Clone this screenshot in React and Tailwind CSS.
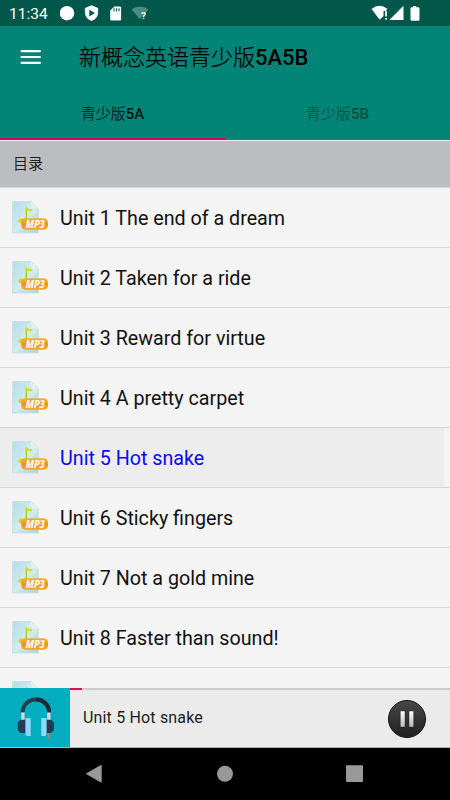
import React from 'react';

const units = [
  'Unit 1 The end of a dream',
  'Unit 2 Taken for a ride',
  'Unit 3 Reward for virtue',
  'Unit 4 A pretty carpet',
  'Unit 5 Hot snake',
  'Unit 6 Sticky fingers',
  'Unit 7 Not a gold mine',
  'Unit 8 Faster than sound!',
];
const current = 4;

function StatusBar() {
  return (
    <div className="flex h-[26px] shrink-0 items-center bg-[#015749] pl-[9px] pr-[30px] text-white">
      <span className="w-[51px] pt-[2px] text-[15.5px] leading-[24px]">11:34</span>
      <svg className="h-[26px] w-[92px]" viewBox="0 0 92 26" fill="#fff">
        <circle cx="7" cy="13.2" r="7.3" />
        <path d="M31.5 5.3l6.6 2.6v4.6c0 3.9-2.7 7.2-6.6 8.4-3.9-1.2-6.6-4.5-6.6-8.4V7.9z" />
        <path d="M29.3 9.7v6.8l5.7-3.4z" fill="#015749" />
        <path d="M54.3 6.4h5.6q1.2 0 1.2 1.200v11.700q0 1.200-1.200 1.200h-8.500q-1.200 0-1.200-1.200v-8.800z" />
        <path d="M54 8.300v3M56.500 8.300v3M59 8.300v3" stroke="#015749" strokeWidth="1.1" />
        <path d="M71.500 9.300q8.400-5.500 16.800 0l-2 2.600-3.700 4-2.800 3.400z" fill="#4c8a80" />
        <text x="81.300" y="18.800" fontSize="9.500" fontWeight="700">?</text>
      </svg>
      <svg className="ml-auto h-[26px] w-[50px]" viewBox="370 0 50 26" fill="#fff">
        <path d="M371.500 9q8-6.400 16 0l-1.800 2.100h-2.200v4.800l-3.800 3.800z" />
        <path d="M385.200 11h1.700v5.500h-1.700zM385.200 18h1.700v1.800h-1.700z" />
        <path d="M403.500 5.700v14.200h-14.200z" />
        <path d="M413 6h3.300v1.300h2q1.200 0 1.200 1.200v11q0 1.200-1.200 1.200h-6.600q-1.200 0-1.200-1.200v-11q0-1.200 1.200-1.200H413z" />
      </svg>
    </div>
  );
}

function Paper() {
  return (
    <>
      <defs>
        <linearGradient id="paper" x1="0" y1="0" x2="1" y2="1">
          <stop offset="0" stopColor="#b4dfe8" />
          <stop offset=".5" stopColor="#cfe8eb" />
          <stop offset="1" stopColor="#a6d6de" />
        </linearGradient>
      </defs>
      <path d="M.5.500H19l7.300 7V32H.5z" fill="url(#paper)" stroke="#c4e0e5" strokeWidth=".8" />
      <path d="M2 31L16 2h3v6h6v3L5 31z" fill="#dceff1" opacity=".5" />
      <path d="M19 .5l7.300 7H20q-1 0-1-1z" fill="#e5eff1" />
    </>
  );
}

function Mp3Icon() {
  return (
    <svg className="h-[34px] w-[37px] shrink-0" viewBox="0 0 37 34">
      <Paper />
      <defs>
        <linearGradient id="badge" x1="0" y1="0" x2="0" y2="1">
          <stop offset="0" stopColor="#f9b125" />
          <stop offset=".5" stopColor="#f6921e" />
          <stop offset="1" stopColor="#f9a72b" />
        </linearGradient>
      </defs>
      <path d="M14.300 6.500v13" stroke="#b4cc1c" strokeWidth="1.500" />
      <path d="M14 6q2 2.600 6.200 1.700v2.500q-4 .5-6-1z" fill="#d4df24" />
      <ellipse cx="10.500" cy="20" rx="4" ry="2.500" fill="#c5d72b" />
      <rect x="9.200" y="17.200" width="26.800" height="11.600" rx="4.500" fill="url(#badge)" />
      <text className="font-['Open_Sans',sans-serif]" x="13.700" y="26.500" fontSize="10" fontWeight="700" fontStyle="italic" fill="#fff" stroke="#fff" strokeWidth=".2" textLength="19" lengthAdjust="spacingAndGlyphs">MP3</text>
    </svg>
  );
}

function UnitRow({ title, active }) {
  return (
    <div className="flex h-[60px] shrink-0 border-b border-[#d5d5d5]">
      <div className={`flex w-[444px] items-center gap-[11px] pl-3 ${active ? 'bg-[#ededed] text-[#0808f5]' : 'text-[#111]'}`}>
        <Mp3Icon />
        <span className="pt-[2px] whitespace-nowrap text-[19.7px] leading-[30px]">{title}</span>
      </div>
    </div>
  );
}

function Headphones() {
  return (
    <svg className="h-[60px] w-[70px]" viewBox="0 688 70 60">
      <path d="M22.700 712.500v-.5a13.200 12.500 0 0 1 26.400 0v.5" fill="none" stroke="#293b50" strokeWidth="4" />
      <path d="M36 699.500a13.200 12.500 0 0 1 13.100 12.500v.5" fill="none" stroke="#202936" strokeWidth="4" />
      <path d="M21.300 712.500h3.300v8.500h-3.300zM47.200 712.500h3.300v8.500h-3.300z" fill="#d5d9dd" />
      <path d="M20.500 719.700h5v13.300h-5l-2.700-3v-7.500zM46.500 719.700h4.700l2.700 2.800v7.500l-2.700 3h-4.700z" fill="#253950" />
      <path d="M25.500 718h5.200v18h-3.200q-2 0-2-2zM41.300 718h5.200v16q0 2-2 2h-3.200z" fill="#91d7fb" />
      <path d="M48.600 733v6" stroke="#a3857f" strokeWidth="1.800" />
    </svg>
  );
}

function PauseButton() {
  return (
    <svg className="mr-[23px] ml-auto h-[40px] w-[40px]" viewBox="0 0 40 40">
      <defs>
        <linearGradient id="disc" x1="0" y1="0" x2="0" y2="1">
          <stop offset="0" stopColor="#484848" />
          <stop offset="1" stopColor="#202020" />
        </linearGradient>
        <linearGradient id="bars" x1="0" y1="0" x2="0" y2="1">
          <stop offset="0" stopColor="#fff" />
          <stop offset="1" stopColor="#b9b9b9" />
        </linearGradient>
      </defs>
      <circle cx="20" cy="20" r="18.500" fill="url(#disc)" stroke="#111" />
      <rect x="13.300" y="12" width="4.700" height="16" rx=".6" fill="url(#bars)" stroke="#111" strokeWidth=".4" />
      <rect x="22" y="12" width="4.700" height="16" rx=".6" fill="url(#bars)" stroke="#111" strokeWidth=".4" />
    </svg>
  );
}

export default function App() {
  return (
    <div className="flex h-[800px] w-[450px] flex-col overflow-hidden bg-[#f4f4f4] font-['Roboto','Noto_Sans_CJK_SC',sans-serif]">
      <StatusBar />
      <header className="flex h-[114px] shrink-0 flex-col bg-[#028577]">
        <div className="flex h-[62px] items-center">
          <svg className="ml-[20px] h-[20px] w-[22px]" viewBox="0 0 22 20">
            <path d="M.7 4.200h20M.7 10h20M.7 15.800h20" stroke="#fff" strokeWidth="2.200" />
          </svg>
          <h1 className="ml-[37px] pt-[2px] whitespace-nowrap text-[22px] leading-[32px] text-black">
            <span className="font-light [-webkit-text-stroke:0.25px_currentColor]">新概念英语青少版</span>
            <span className="font-medium">5A5B</span>
          </h1>
        </div>
        <nav className="grid flex-1 grid-cols-2 text-center text-[15px] leading-[20px]">
          <div className="border-b-2 border-[#d2065b] pt-[16px] text-[#001210]">
            <span className="font-light [-webkit-text-stroke:0.15px_currentColor]">青少版</span>
            <span className="font-medium">5A</span>
          </div>
          <div className="pt-[16px] text-[#034c43]">
            <span className="font-light [-webkit-text-stroke:0.15px_currentColor]">青少版</span>
            <span className="font-medium">5B</span>
          </div>
        </nav>
      </header>
      <div className="flex h-[48px] shrink-0 items-center border-t border-b border-t-[#e6f0ee] border-b-[#d5d5d5] bg-[#bcbdc1] pl-[13px] text-[15px] font-light text-black [-webkit-text-stroke:0.2px_currentColor]">
        目录
      </div>
      <main className="flex min-h-0 flex-1 flex-col overflow-hidden">
        {units.map((u, i) => (
          <UnitRow key={u} title={u} active={i === current} />
        ))}
        <div className="pt-[13px] pl-3">
          <svg className="h-[7px] w-[37px]" viewBox="0 0 37 7">
            <Paper />
            <path d="M14 6q2 2.600 6.200 1.700" stroke="#d4df24" fill="none" />
          </svg>
        </div>
      </main>
      <footer className="flex h-[60px] shrink-0 border-b border-[#b0b0b0] bg-[#ebebeb]">
        <div className="w-[70px] overflow-hidden bg-[#03adbf]">
          <Headphones />
        </div>
        <div className="flex flex-1 flex-col">
          <div className="h-[2px] bg-[#cacaca]">
            <div className="h-full w-[12px] bg-[#e10a55]" />
          </div>
          <div className="flex flex-1 items-center pl-[13px] text-[16px] text-[#1c1c1c]">
            <span className="mb-[2px] tracking-[0.17px]">Unit 5 Hot snake</span>
            <PauseButton />
          </div>
        </div>
      </footer>
      <div className="flex h-[52px] shrink-0 bg-black">
        <svg className="h-[52px] w-[450px]" viewBox="0 748 450 52" fill="#999">
          <path d="M100.500 765.300q1.200-.6 1.200.7v15.600q0 1.300-1.200.7l-14-8q-.9-.5 0-1z" />
          <circle cx="225" cy="773.800" r="8" />
          <rect x="346" y="765.300" width="17" height="16.700" rx="1" />
        </svg>
      </div>
    </div>
  );
}
